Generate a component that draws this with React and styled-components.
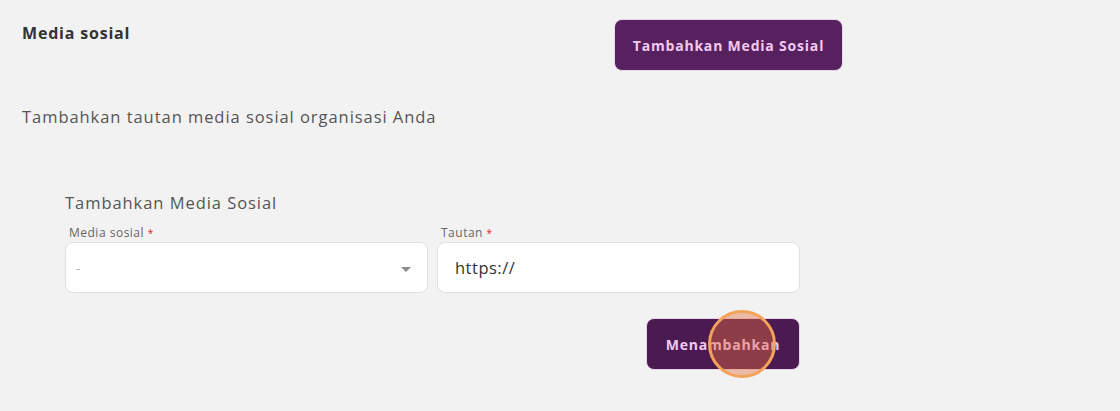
import React from 'react';
import styled, { createGlobalStyle } from 'styled-components';

const GlobalStyle = createGlobalStyle`
  html, body {
    margin: 0;
    padding: 0;
    background: #f2f2f2;
  }
  body {
    font-family: "Open Sans", "DejaVu Sans", sans-serif;
  }
`;

const Page = styled.div`
  width: 1120px;
  height: 411px;
  box-sizing: border-box;
  padding: 19px 0 0 22px;
  background: #f2f2f2;
`;

const HeaderRow = styled.div`
  display: flex;
  justify-content: space-between;
  align-items: flex-start;
  width: 821px;
`;

const Title = styled.h2`
  margin: 3px 0 0;
  font-size: 16px;
  font-weight: 700;
  letter-spacing: 0.8px;
  color: #333;
`;

const PrimaryButton = styled.button`
  font-family: "Open Sans", "DejaVu Sans", sans-serif;
  font-weight: 700;
  font-size: 14px;
  letter-spacing: 0.8px;
  color: #f3c9f0;
  background: ${p => (p.$dark ? '#4b1a50' : '#57215f')};
  border: 1px solid #e9d6ea;
  border-radius: 8px;
  width: ${p => p.$width}px;
  height: 52px;
  padding: 0;
  cursor: pointer;
`;

const Description = styled.p`
  margin: 34px 0 0;
  font-size: 16.5px;
  letter-spacing: 0.95px;
  color: #555;
`;

const FormSection = styled.div`
  margin: 63px 0 0 43px;
  width: 735px;
`;

const SectionTitle = styled.h3`
  margin: 0;
  font-size: 16.5px;
  font-weight: 400;
  letter-spacing: 0.95px;
  color: #555;
`;

const Fields = styled.div`
  display: grid;
  grid-template-columns: 363px 363px;
  gap: 9px;
  margin-top: 12px;
`;

const Field = styled.div`
  display: flex;
  flex-direction: column;
`;

const Label = styled.label`
  font-size: 12px;
  letter-spacing: 0.5px;
  color: #666;
  padding-left: 4px;
  margin-bottom: 2px;
  line-height: 14px;
`;

const Required = styled.span`
  color: #d22;
  font-size: 10px;
  vertical-align: top;
`;

const InputBox = styled.div`
  box-sizing: border-box;
  height: 51px;
  background: #fff;
  border: 1px solid #e0e0e0;
  border-radius: 8px;
  display: flex;
  align-items: center;
  justify-content: space-between;
  padding: 0 16px 0 ${p => (p.$select ? 10 : 17)}px;
  font-size: ${p => (p.$select ? 13 : 16.5)}px;
  letter-spacing: ${p => (p.$select ? 0 : 0.5)}px;
  color: ${p => (p.$select ? '#aaa' : '#333')};
`;

const Caret = styled.span`
  width: 0;
  height: 0;
  border-left: 5px solid transparent;
  border-right: 5px solid transparent;
  border-top: 5px solid #8a8a8a;
  margin-top: 4px;
`;

const Actions = styled.div`
  display: flex;
  justify-content: flex-end;
  margin-top: 25px;
`;

const ButtonWrap = styled.div`
  position: relative;
`;

const ClickMarker = styled.span`
  position: absolute;
  left: 62px;
  top: -8px;
  width: 68px;
  height: 68px;
  border-radius: 50%;
  box-sizing: border-box;
  border: 3px solid #f3a45a;
  background: rgba(232, 110, 60, 0.42);
  pointer-events: none;
`;

export default function App() {
  return (
    <Page>
      <GlobalStyle />
      <HeaderRow>
        <Title>Media sosial</Title>
        <PrimaryButton $width={229}>Tambahkan Media Sosial</PrimaryButton>
      </HeaderRow>
      <Description>Tambahkan tautan media sosial organisasi Anda</Description>
      <FormSection>
        <SectionTitle>Tambahkan Media Sosial</SectionTitle>
        <Fields>
          <Field>
            <Label>Media sosial <Required>*</Required></Label>
            <InputBox $select>
              <span>-</span>
              <Caret />
            </InputBox>
          </Field>
          <Field>
            <Label>Tautan <Required>*</Required></Label>
            <InputBox>https://</InputBox>
          </Field>
        </Fields>
        <Actions>
          <ButtonWrap>
            <PrimaryButton $dark $width={154}>Menambahkan</PrimaryButton>
            <ClickMarker />
          </ButtonWrap>
        </Actions>
      </FormSection>
    </Page>
  );
}
